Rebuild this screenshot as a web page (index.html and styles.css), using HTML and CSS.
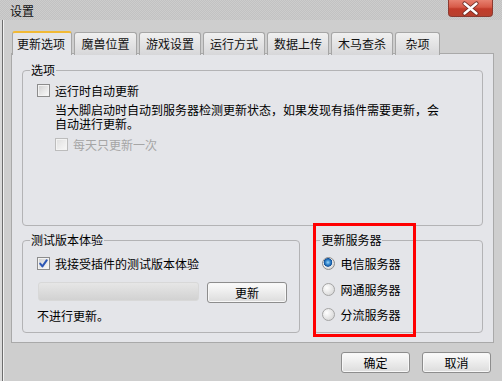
FILE: index.html
```html
<!DOCTYPE html>
<html lang="zh-CN">
<head>
<meta charset="utf-8">
<title>设置</title>
<link rel="stylesheet" href="styles.css">
</head>
<body>
<div class="window">
  <div class="titlebar">
    <span class="title">设置</span>
    <button class="close" type="button" aria-label="关闭">
      <svg width="45" height="17" viewBox="0 0 45 17">
        <path d="M16.5 3.5 L28.5 13.5 M28.5 3.5 L16.5 13.5" stroke="#6b2a22" stroke-width="4.2" stroke-linecap="round" fill="none"/>
        <path d="M16.5 3.5 L28.5 13.5 M28.5 3.5 L16.5 13.5" stroke="#ffffff" stroke-width="2.4" stroke-linecap="round" fill="none"/>
      </svg>
    </button>
  </div>
  <div class="content">
    <div class="tabs">
      <div class="tab active w60">更新选项</div>
      <div class="tab w63">魔兽位置</div>
      <div class="tab w62">游戏设置</div>
      <div class="tab w62">运行方式</div>
      <div class="tab w62">数据上传</div>
      <div class="tab w62">木马查杀</div>
      <div class="tab w45">杂项</div>
    </div>
    <div class="panel">
      <div class="group options">
        <div class="legend">选项</div>
        <div class="check-row first-row">
          <span class="checkbox"></span>
          <span>运行时自动更新</span>
        </div>
        <div class="desc">
          <div class="desc-line">当大脚启动时自动到服务器检测更新状态，如果发现有插件需要更新，会</div>
          <div class="desc-line">自动进行更新。</div>
        </div>
        <div class="check-row sub-row disabled">
          <span class="checkbox"></span>
          <span>每天只更新一次</span>
        </div>
      </div>
      <div class="bottom-row">
        <div class="group test">
          <div class="legend">测试版本体验</div>
          <div class="check-row test-check">
            <span class="checkbox checked">
              <svg width="11" height="11" viewBox="0 0 11 11"><path d="M2.2 5.6 L4.4 8.4 L8.8 2.2" stroke="#2d57b5" stroke-width="2" fill="none" stroke-linecap="round" stroke-linejoin="round"/></svg>
            </span>
            <span>我接受插件的测试版本体验</span>
          </div>
          <div class="progress-row">
            <div class="progress"></div>
            <button class="btn update" type="button">更新</button>
          </div>
          <div class="status">不进行更新。</div>
        </div>
        <div class="group server">
          <div class="legend server-legend">更新服务器</div>
          <div class="radio-row r1"><span class="radio on"></span><span>电信服务器</span></div>
          <div class="radio-row r2"><span class="radio"></span><span>网通服务器</span></div>
          <div class="radio-row r3"><span class="radio"></span><span>分流服务器</span></div>
        </div>
      </div>
    </div>
    <div class="footer">
      <button class="btn dlg" type="button">确定</button>
      <button class="btn dlg" type="button">取消</button>
    </div>
  </div>
  <div class="annotation"></div>
</div>
</body>
</html>
```
FILE: styles.css
```css
* { box-sizing: border-box; }
html, body { margin: 0; padding: 0; }
body {
  width: 502px;
  height: 381px;
  overflow: hidden;
  font-family: "Noto Sans CJK SC", "Noto Sans", sans-serif;
  font-size: 12px;
  color: #000;
  background: #dadada;
}
.window {
  position: relative;
  width: 502px;
  height: 381px;
  display: flex;
  flex-direction: column;
  background: #dadada;
}
.titlebar {
  height: 20px;
  flex: none;
  display: flex;
  align-items: flex-start;
  background-color: #cdcdcd;
  background-image:
    linear-gradient(45deg, #c2c2c2 25%, transparent 25%, transparent 75%, #c2c2c2 75%),
    linear-gradient(45deg, #c2c2c2 25%, transparent 25%, transparent 75%, #c2c2c2 75%);
  background-size: 2px 2px;
  background-position: 0 0, 1px 1px;
}
.title {
  margin-left: 10px;
  margin-top: 3px;
  line-height: 16px;
  color: #111;
}
.close {
  margin-left: auto;
  margin-right: 9px;
  width: 45px;
  height: 17px;
  padding: 0;
  border: 1px solid #8c3a30;
  border-top: none;
  border-radius: 0 0 4px 4px;
  background: linear-gradient(#e7806f 0%, #d75a48 45%, #c23b2a 55%, #b7412f 100%);
  display: flex;
  align-items: center;
  justify-content: center;
}
.close svg { display: block; margin: -1px; }
.content {
  flex: 1;
  display: flex;
  flex-direction: column;
  margin-left: 2px;
  border-left: 1px solid #6d6d6d;
  box-shadow: inset 1px 0 #f2f2f2;
  background: #cecece;
}
.tabs {
  display: flex;
  gap: 2px;
  margin-top: 11px;
  padding-left: 9px;
  height: 23px;
  position: relative;
  z-index: 2;
  margin-bottom: -1px;
}
.tab {
  height: 23px;
  margin-top: 1px;
  border: 1px solid #a6a6a6;
  border-bottom: none;
  border-radius: 3px 3px 0 0;
  background: linear-gradient(#f0f0f0, #d7d7d9);
  text-align: center;
  line-height: 21px;
  color: #111;
}
.tab.active {
  margin-top: 0;
  height: 24px;
  border-top: 2px solid #f1b935;
  background: #e4e5e9;
  line-height: 22px;
  text-align: left;
  padding-left: 4px;
}
.w60 { width: 60px; }
.w63 { width: 63px; }
.w62 { width: 62px; }
.w45 { width: 45px; }
.panel {
  margin-left: 8px;
  width: 483px;
  height: 290px;
  border: 1px solid #a9a9a9;
  background: #e4e5e9;
  padding: 0 10px;
  display: flex;
  flex-direction: column;
}
.group {
  border: 1px solid #b3b3b5;
  border-radius: 4px;
}
.legend {
  width: fit-content;
  margin-top: -8px;
  margin-left: -7px;
  padding: 0 1px;
  line-height: 14px;
  background: #e4e5e9;
}
.server-legend { margin-left: -2px; }
.options {
  margin-top: 16px;
  height: 156px;
  padding-left: 14px;
}
.check-row {
  display: flex;
  align-items: center;
  gap: 5px;
  height: 16px;
}
.first-row { margin-top: 5px; }
.desc {
  margin-left: 18px;
  margin-top: 6px;
  font-family: "Liberation Sans", "Noto Sans CJK SC", sans-serif;
}
.desc-line {
  line-height: 14px;
  height: 14px;
}
.sub-row { margin-top: 4px; margin-left: 18px; }
.disabled { color: #a6a6a6; }
.checkbox {
  width: 13px;
  height: 13px;
  flex: none;
  border: 1px solid #8c8c8c;
  background: linear-gradient(135deg, #cfcfcf 0%, #e6e6e6 50%, #fbfbfb 100%);
  box-shadow: inset 0 0 0 1px #f3f3f3;
  display: flex;
  align-items: center;
  justify-content: center;
}
.disabled .checkbox {
  border-color: #bcbcbc;
  background: linear-gradient(135deg, #dedede 0%, #ececec 50%, #f8f8f8 100%);
}
.checkbox svg { display: block; }
.bottom-row {
  display: flex;
  gap: 13px;
  margin-top: 14px;
}
.test {
  width: 279px;
  height: 93px;
  padding-left: 14px;
}
.test-check { margin-top: 8px; }
.progress-row {
  display: flex;
  align-items: flex-start;
  gap: 8px;
  margin-top: 11px;
  margin-left: 1px;
}
.progress {
  width: 161px;
  height: 19px;
  border-radius: 3px;
  background: linear-gradient(#e6e6e6, #d2d2d2);
  border: 1px solid #d8d8d8;
}
.btn {
  font-family: inherit;
  font-size: 12px;
  color: #000;
  padding: 0;
  border: 1px solid #8d8d8d;
  border-radius: 3px;
  background: linear-gradient(#fbfbfb 0%, #ececec 50%, #dcdcdc 100%);
  box-shadow: inset 0 0 0 1px #f7f7f7;
  line-height: 19px;
}
.update { width: 80px; height: 21px; }
.status {
  margin-top: 5px;
  line-height: 16px;
}
.server {
  width: 170px;
  height: 93px;
  padding-left: 8px;
}
.radio-row {
  display: flex;
  align-items: center;
  gap: 5px;
  height: 16px;
}
.r1 { margin-top: 8px; }
.r2 { margin-top: 10px; }
.r3 { margin-top: 9px; }
.radio {
  width: 13px;
  height: 13px;
  flex: none;
  border-radius: 50%;
  border: 1px solid #a4a4a4;
  background: radial-gradient(circle at 35% 35%, #ffffff 0%, #e9e9e9 45%, #cfcfcf 100%);
}
.radio.on {
  border-color: #8c8c8c;
  background:
    radial-gradient(circle at 45% 40%, #9fd4f7 0px, #3f93d6 2px, #0e4f9a 4px, transparent 4.6px),
    radial-gradient(circle at 35% 35%, #ffffff 0%, #e3e3e3 60%, #c8c8c8 100%);
}
.footer {
  display: flex;
  justify-content: flex-end;
  gap: 12px;
  margin-top: 9px;
  padding-right: 11px;
}
.dlg { width: 69px; height: 21px; }
.annotation {
  position: absolute;
  left: 313px;
  top: 223px;
  width: 103px;
  height: 114px;
  border: 3px solid #ff0000;
}
```
